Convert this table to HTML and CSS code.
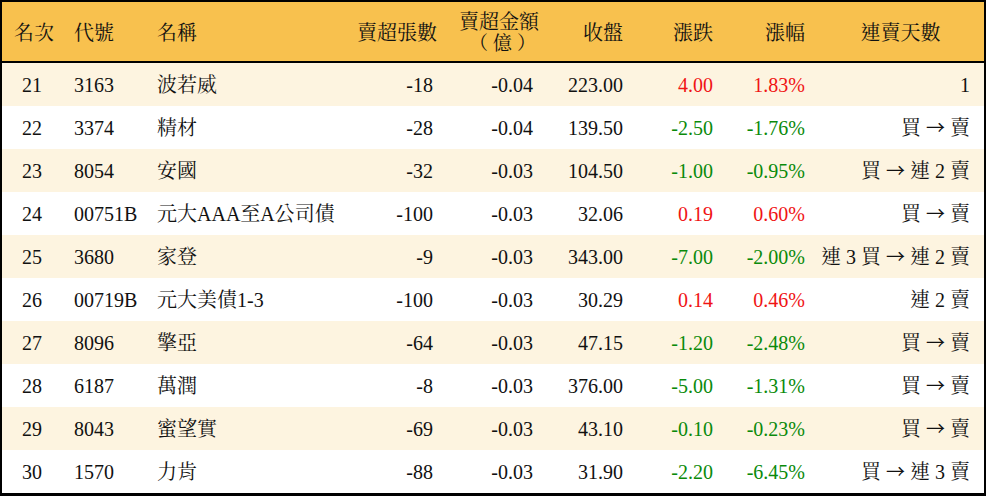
FILE: index.html
```html
<!DOCTYPE html>
<html lang="zh-Hant">
<head>
<meta charset="utf-8">
<title>賣超排行</title>
<link rel="stylesheet" href="styles.css">
</head>
<body>
<table class="rank">
  <colgroup>
    <col class="c-rank"><col class="c-code"><col class="c-name"><col class="c-vol"><col class="c-amt"><col class="c-close"><col class="c-chg"><col class="c-pct"><col class="c-days">
  </colgroup>
  <thead>
    <tr>
      <th class="ctr">名次</th>
      <th class="lft">代號</th>
      <th class="lft">名稱</th>
      <th class="rgt">賣超張數</th>
      <th class="rgt"><span class="two"><span class="line">賣超金額</span><span class="line unit">（億）</span></span></th>
      <th class="rgt">收盤</th>
      <th class="rgt">漲跌</th>
      <th class="rgt">漲幅</th>
      <th class="ctr">連賣天數</th>
    </tr>
  </thead>
  <tbody>
    <tr class="alt"><td class="ctr">21</td><td>3163</td><td>波若威</td><td class="rgt">-18</td><td class="rgt">-0.04</td><td class="rgt">223.00</td><td class="rgt up">4.00</td><td class="rgt up">1.83%</td><td class="rgt">1</td></tr>
    <tr><td class="ctr">22</td><td>3374</td><td>精材</td><td class="rgt">-28</td><td class="rgt">-0.04</td><td class="rgt">139.50</td><td class="rgt dn">-2.50</td><td class="rgt dn">-1.76%</td><td class="rgt">買 <span class="arr">→</span> 賣</td></tr>
    <tr class="alt"><td class="ctr">23</td><td>8054</td><td>安國</td><td class="rgt">-32</td><td class="rgt">-0.03</td><td class="rgt">104.50</td><td class="rgt dn">-1.00</td><td class="rgt dn">-0.95%</td><td class="rgt">買 <span class="arr">→</span> 連 2 賣</td></tr>
    <tr><td class="ctr">24</td><td>00751B</td><td>元大AAA至A公司債</td><td class="rgt">-100</td><td class="rgt">-0.03</td><td class="rgt">32.06</td><td class="rgt up">0.19</td><td class="rgt up">0.60%</td><td class="rgt">買 <span class="arr">→</span> 賣</td></tr>
    <tr class="alt"><td class="ctr">25</td><td>3680</td><td>家登</td><td class="rgt">-9</td><td class="rgt">-0.03</td><td class="rgt">343.00</td><td class="rgt dn">-7.00</td><td class="rgt dn">-2.00%</td><td class="rgt">連 3 買 <span class="arr">→</span> 連 2 賣</td></tr>
    <tr><td class="ctr">26</td><td>00719B</td><td>元大美債1-3</td><td class="rgt">-100</td><td class="rgt">-0.03</td><td class="rgt">30.29</td><td class="rgt up">0.14</td><td class="rgt up">0.46%</td><td class="rgt">連 2 賣</td></tr>
    <tr class="alt"><td class="ctr">27</td><td>8096</td><td>擎亞</td><td class="rgt">-64</td><td class="rgt">-0.03</td><td class="rgt">47.15</td><td class="rgt dn">-1.20</td><td class="rgt dn">-2.48%</td><td class="rgt">買 <span class="arr">→</span> 賣</td></tr>
    <tr><td class="ctr">28</td><td>6187</td><td>萬潤</td><td class="rgt">-8</td><td class="rgt">-0.03</td><td class="rgt">376.00</td><td class="rgt dn">-5.00</td><td class="rgt dn">-1.31%</td><td class="rgt">買 <span class="arr">→</span> 賣</td></tr>
    <tr class="alt"><td class="ctr">29</td><td>8043</td><td>蜜望實</td><td class="rgt">-69</td><td class="rgt">-0.03</td><td class="rgt">43.10</td><td class="rgt dn">-0.10</td><td class="rgt dn">-0.23%</td><td class="rgt">買 <span class="arr">→</span> 賣</td></tr>
    <tr><td class="ctr">30</td><td>1570</td><td>力肯</td><td class="rgt">-88</td><td class="rgt">-0.03</td><td class="rgt">31.90</td><td class="rgt dn">-2.20</td><td class="rgt dn">-6.45%</td><td class="rgt">買 <span class="arr">→</span> 連 3 賣</td></tr>
  </tbody>
</table>
</body>
</html>
```

FILE: styles.css
```css
html, body {
  margin: 0;
  padding: 0;
  background: #ffffff;
}

.rank {
  width: 986px;
  border-collapse: separate;
  border-spacing: 0;
  table-layout: fixed;
  border: 2px solid #000;
  border-bottom-width: 3px;
  font-family: "Liberation Serif", "Noto Serif CJK TC", "Noto Sans CJK TC", serif;
  font-size: 20px;
  color: #111;
}

.c-rank { width: 60px; }
.c-code { width: 83px; }
.c-name { width: 200px; }
.c-vol { width: 100px; }
.c-amt { width: 100px; }
.c-close { width: 90px; }
.c-chg { width: 90px; }
.c-pct { width: 92px; }
.c-days { width: 167px; }

.rank th {
  background: #f8c14e;
  height: 59px;
  padding: 0 12px;
  font-weight: normal;
  line-height: 20px;
  vertical-align: middle;
  border-bottom: 2px solid #000;
  white-space: nowrap;
  font-family: "Noto Serif CJK TC", "Noto Sans CJK TC", sans-serif;
}

.rank th .two {
  display: inline-flex;
  flex-direction: column;
  align-items: center;
  gap: 1px;
}

.rank th .line {
  display: block;
  line-height: 20px;
}

.rank th .unit {
  font-size: 19px;
  letter-spacing: 5px;
  padding-left: 12px;
}

.rank td {
  height: 43px;
  padding: 0 12px;
  vertical-align: middle;
  white-space: nowrap;
  line-height: 22px;
}

.rank tr.alt td {
  background: #fdf4e0;
}

.rank td:last-child {
  padding-left: 0;
  padding-right: 14px;
}

.arr {
  font-family: "Noto Sans CJK TC", sans-serif;
  font-size: 19px;
}

.lft { text-align: left; }
.rgt { text-align: right; }
.ctr { text-align: center; }

.rank td.ctr {
  padding: 0;
}

.up { color: #f01414; }
.dn { color: #0a8a0a; }
```
